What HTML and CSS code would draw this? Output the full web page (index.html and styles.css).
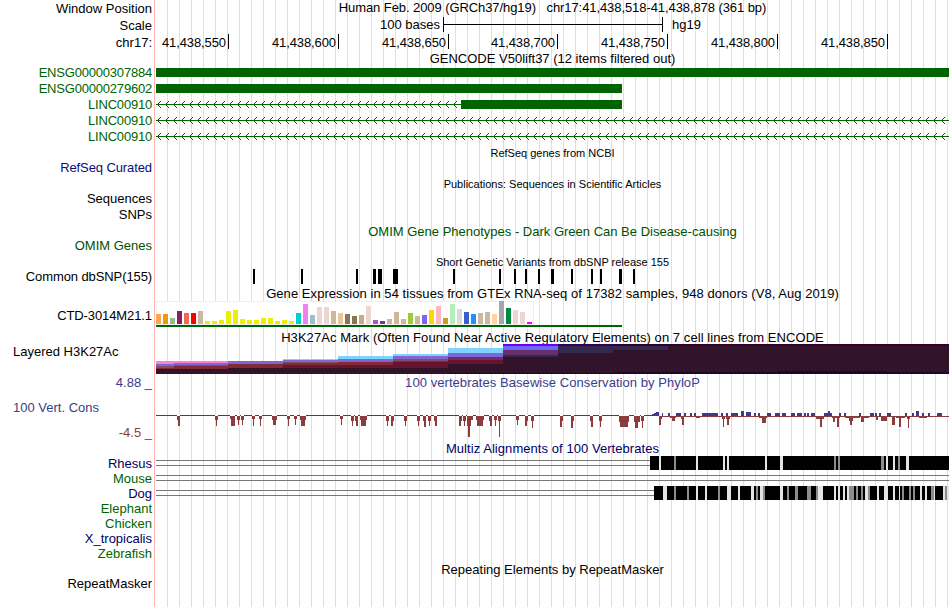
FILE: index.html
```html
<!DOCTYPE html>
<html lang="en">
<head>
<meta charset="utf-8">
<title>Genome Browser chr17:41,438,518-41,438,878</title>
<link rel="stylesheet" href="styles.css">
</head>
<body>
<main class="browser">
  <section class="row h16"><div class="label lower">Window Position</div><div class="plot title position">Human Feb. 2009 (GRCh37/hg19) &nbsp; chr17:41,438,518-41,438,878 (361 bp)</div></section>
  <section class="row h17"><div class="label lower">Scale</div><div class="plot scale"><span class="scale-size">100 bases</span><span class="scale-bar"></span><span>hg19</span></div></section>
  <section class="row h17"><div class="label lower">chr17:</div><div class="plot ruler"><span>41,438,550</span><span>41,438,600</span><span>41,438,650</span><span class="short">41,438,700</span><span>41,438,750</span><span>41,438,800</span><span>41,438,850</span></div></section>
  <section class="row h14"><div></div><div class="plot title lower">GENCODE V50lift37 (12 items filtered out)</div></section>
  <section class="row h16 gene"><div class="label lower">ENSG00000307884</div><svg class="plot" data-exon="0,793"></svg></section>
  <section class="row h16 gene"><div class="label lower">ENSG00000279602</div><svg class="plot" data-exon="0,466"></svg></section>
  <section class="row h16 gene"><div class="label lower">LINC00910</div><svg class="plot" data-intron="305" data-exon="305,161"></svg></section>
  <section class="row h16 gene"><div class="label lower">LINC00910</div><svg class="plot" data-intron="793"></svg></section>
  <section class="row h16 gene"><div class="label lower">LINC00910</div><svg class="plot" data-intron="793"></svg></section>
  <section class="row h16"><div></div><div class="plot title small lower">RefSeq genes from NCBI</div></section>
  <section class="row h15"><div class="label navy">RefSeq Curated</div></section>
  <section class="row h16"><div></div><div class="plot title small lower">Publications: Sequences in Scientific Articles</div></section>
  <section class="row h16"><div class="label">Sequences</div></section>
  <section class="row h16"><div class="label">SNPs</div></section>
  <section class="row h15 omim"><div></div><div class="plot title lower">OMIM Gene Phenotypes - Dark Green Can Be Disease-causing</div></section>
  <section class="row h15 omim"><div class="label">OMIM Genes</div></section>
  <section class="row h16"><div></div><div class="plot title small lower">Short Genetic Variants from dbSNP release 155</div></section>
  <section class="row h16"><div class="label tight">Common dbSNP(155)</div><svg class="plot" id="snps"></svg></section>
  <section class="row h16"><div></div><div class="plot title wide lower">Gene Expression in 54 tissues from GTEx RNA-seq of 17382 samples, 948 donors (V8, Aug 2019)</div></section>
  <section class="row h29"><div class="label tight">CTD-3014M21.1</div><svg class="plot" id="gtex"></svg></section>
  <section class="row h14"><div></div><div class="plot title wide">H3K27Ac Mark (Often Found Near Active Regulatory Elements) on 7 cell lines from ENCODE</div></section>
  <section class="row h30"><div class="label left">Layered H3K27Ac</div><svg class="plot" id="h3k27ac"></svg></section>
  <section class="row h18 phylop"><div class="label">4.88 _</div><div class="plot title wide">100 vertebrates Basewise Conservation by PhyloP</div></section>
  <section class="row h49 phylop"><div class="label left stacked"><span>100 Vert. Cons</span><span class="minimum">-4.5 _</span></div><svg class="plot" id="phylop"></svg></section>
  <section class="row h15"><div></div><div class="plot title wide multiz">Multiz Alignments of 100 Vertebrates</div></section>
  <section class="row h15"><div class="label species">Rhesus</div><svg class="plot" id="rhesus"></svg></section>
  <section class="row h15"><div class="label green">Mouse</div><svg class="plot" id="mouse"></svg></section>
  <section class="row h15"><div class="label species">Dog</div><svg class="plot" id="dog"></svg></section>
  <section class="row h15"><div class="label green">Elephant</div></section>
  <section class="row h15"><div class="label green">Chicken</div></section>
  <section class="row h15"><div class="label species">X_tropicalis</div></section>
  <section class="row h15"><div class="label green">Zebrafish</div></section>
  <section class="row h15"><div></div><div class="plot title lower">Repeating Elements by RepeatMasker</div></section>
  <section class="row h15"><div class="label">RepeatMasker</div></section>
</main>
<script src="tracks.js"></script>
</body>
</html>
```
FILE: styles.css
```css
* { box-sizing: border-box; }

body {
  margin: 0;
  background: #fff;
  color: #000;
  font: 13px "Liberation Sans", Arial, sans-serif;
}

.browser {
  width: 949px;
  height: 607px;
  overflow: hidden;
  background:
    linear-gradient(#ffb4b4, #ffb4b4) 154px 0 / 1px 100% no-repeat,
    repeating-linear-gradient(90deg, transparent 0 11px, #dcdcf8 11px 12px) 156px 0 / 793px 100% no-repeat;
}

.row { display: grid; grid-template-columns: 152px 793px; column-gap: 4px; white-space: nowrap; }
.h14 { height: 14px; line-height: 16px; }
.h15 { height: 15px; line-height: 15px; }
.h16 { height: 16px; line-height: 16px; }
.h17 { height: 17px; line-height: 17px; }
.h18 { height: 18px; line-height: 18px; }
.h29 { height: 29px; line-height: 29px; }
.h30 { height: 30px; line-height: 15px; }
.h49 { height: 49px; line-height: 15px; }

.label { text-align: right; }
.left { text-align: left; padding-left: 13px; }
.title { text-align: center; }
.lower { padding-top: 1px; }
.small { font-size: 11px; }
.tight { letter-spacing: -0.1px; }
.wide { letter-spacing: 0.06px; }
.position { letter-spacing: -0.08px; }
svg.plot { display: block; width: 793px; height: 100%; overflow: visible; shape-rendering: crispEdges; }

.gene .label { color: #006400; letter-spacing: -0.2px; }
.green { color: #006400; }
.navy { color: #0c0c78; letter-spacing: -0.1px; }
.species, .multiz { color: #000064; }
.omim { color: #005000; }
.phylop { color: #3c3c8c; }
.minimum { color: #8c3c3c; text-align: right; }
.stacked { display: flex; flex-direction: column; gap: 10px; padding-top: 8px; }

.scale { display: flex; padding-left: 224px; }
.scale-size { width: 59px; text-align: right; margin-right: 4px; }
.scale-bar {
  width: 220px;
  height: 15px;
  margin: 1px 9px 0 0;
  border: solid #000;
  border-width: 0 1px;
  background: linear-gradient(#000, #000) 0 7px / 100% 1px no-repeat;
}

.ruler { display: flex; padding-top: 1px; letter-spacing: -0.1px; }
.ruler span { width: 110px; height: 15px; padding-right: 2px; border-right: 1px solid #000; text-align: right; }
.ruler span:first-child { width: 73px; }
.ruler .short { width: 109px; }
```
FILE: tracks.js
```js
const NS = "http://www.w3.org/2000/svg";
const LEFT = 156;

// x is a window coordinate; y is relative to the row.
function box(svg, x, y, w, h, fill) {
  const r = document.createElementNS(NS, "rect");
  Object.entries({ x: x - LEFT, y, width: w, height: h, fill }).forEach(([k, v]) => r.setAttribute(k, v));
  svg.appendChild(r);
}
const byId = id => document.getElementById(id);

// Genes
const GREEN = "#006400";
document.querySelectorAll(".gene svg").forEach(svg => {
  if (svg.dataset.intron) {
    const end = LEFT + +svg.dataset.intron;
    box(svg, LEFT, 8, end - LEFT, 1, GREEN);
    for (let x = 157; x + 3 < end; x += 8)
      for (let i = 1; i < 4; i++) {
        box(svg, x + i, 8 - i, 1, 1, GREEN);
        box(svg, x + i, 8 + i, 1, 1, GREEN);
      }
  }
  if (svg.dataset.exon) {
    const [x, w] = svg.dataset.exon.split(",").map(Number);
    box(svg, LEFT + x, 4, w, 9, GREEN);
  }
});

// Common SNPs
[[253, 2], [301, 2], [356, 2], [373, 3], [378, 4], [393, 5], [453, 2], [499, 2], [514, 2], [525, 2],
 [538, 2], [551, 3], [571, 2], [591, 2], [600, 2], [619, 3], [633, 2]]
  .forEach(([x, w]) => box(byId("snps"), x, 0, w, 15, "#000"));

// GTEx tissue expression
const gtex = byId("gtex");
box(gtex, 156, 0, 378, 24, "#f0f0f0");
box(gtex, 157, 1, 376, 22, "#fff");
const heights = [10,10,6,13,11,11,13,3,3,4,13,14,5,4,4,6,6,3,4,3,11,20,9,17,17,13,11,10,
  8,9,18,4,3,5,12,5,11,8,9,14,18,6,20,15,12,10,11,12,10,23,16,14,12,2];
const tan = "#cdb79e", yellow = "#eeee00", rose = "#eed5d2";
const colors = ["#ffa54f","#ee9a00","#8fbc8f","#8b1c62","#ee6a50","#ff0000",tan,
  ...Array(13).fill(yellow),"#00cdcd","#ee82ee","#9ac0cd",rose,rose,tan,"#eec591","#8b7355",
  "#8b7355","#cdaa7d",rose,"#b452cd","#7a378b",tan,tan,tan,"#9acd32",tan,"#7a67ee","#ffd700",
  "#ffb6c1","#cd9b1d","#b4eeb4","#d9d9d9","#3a5fcd","#1e90ff",tan,tan,"#ffd39b","#a6a6a6",
  "#008b45",rose,rose,"#ff00ff"];
heights.forEach((h, i) => box(gtex, 156 + i * 7, 23 - h, 5, h, colors[i]));
box(gtex, 156, 24, 466, 2, GREEN);

// H3K27Ac: each band holds [offset from the row top, colour] steps down to the base
const pink = "#ff7fd4", violet = "#7f66d4", mauve = "#7f5064", brown = "#7f2a35",
  maroon = "#661430", dark = "#32142a", sky = "#7fd4ff", plum = "#66306a", ink = "#322850", base = "#190a28";
[[156, 18, [[17, pink], [20, violet], [22, mauve], [24, brown], [25, dark]]],
 [174, 54, [[17, pink], [19, violet], [21, mauve], [22, brown], [25, dark]]],
 [228, 55, [[17, violet], [20, brown], [24, dark]]],
 [283, 55, [[15, sky], [16, violet], [18, mauve], [19, brown], [21, maroon], [24, dark]]],
 [338, 55, [[12, sky], [15, violet], [18, brown], [21, maroon], [24, dark]]],
 [393, 55, [[10, sky], [12, violet], [15, mauve], [17, brown], [18, maroon], [24, dark]]],
 [448, 55, [[4, sky], [9, violet], [13, plum], [16, maroon], [20, dark], [29, base]]],
 [503, 55, [[0, "#6a00f0"], [2, "#6a66ff"], [6, plum], [11, ink], [13, dark], [29, base]]],
 [558, 55, [[0, "#320050"], [2, ink], [9, dark], [29, base]]],
 [613, 55, [[0, "#320028"], [2, ink], [6, dark], [28, base]]],
 [668, 110, [[0, "#320028"], [2, dark], [28, base]]],
 [778, 109, [[0, "#320028"], [2, dark], [27, base]]],
 [887, 62, [[0, "#320028"], [2, dark], [28, base]]]]
  .forEach(([x, w, steps]) => steps.forEach(([y, c]) => box(byId("h3k27ac"), x, y, w, 30 - y, c)));

// PhyloP: negative scores [x, width, height] hang below the axis, positive ones stand on it
const AXIS = 23, RED = "#8c3c3c", BLUE = "#3c3c8c";
const phylop = byId("phylop");
const down = [[177,3,4],[178,2,10],[215,3,4],[216,1,10],[230,5,3],[231,4,10],[237,3,4],[238,1,9],[241,3,4],
[242,1,9],[252,3,3],[253,1,10],[259,3,3],[260,1,10],[272,5,4],[273,3,9],[287,3,3],[288,1,10],[294,3,3],
[295,1,9],[300,6,4],[301,4,10],[340,3,3],[341,1,9],[351,3,5],[352,1,10],[355,3,5],[356,2,10],[360,7,4],
[361,5,10],[386,3,5],[387,1,10],[391,3,5],[391,2,10],[404,3,5],[405,1,10],[417,3,5],[418,1,10],[423,3,5],
[424,2,11],[428,3,5],[429,1,10],[434,3,5],[435,2,10],[459,3,5],[459,2,10],[463,3,5],[464,1,10],[467,6,4],
[467,4,10],[468,2,21],[476,8,4],[477,6,10],[489,3,5],[490,2,10],[494,3,4],[495,1,10],[498,3,5],[499,1,21],
[516,3,4],[517,1,9],[525,3,5],[525,2,10],[531,3,5],[532,1,12],[560,3,5],[560,2,11],[571,3,5],[571,2,12],
[590,3,5],[591,2,11],[599,3,5],[600,1,11],[619,10,6],[620,8,11],[634,6,6],[635,3,12],[641,3,5],[642,1,12],
[659,3,3],[659,2,9],[665,3,1],[670,6,2],[672,3,5],[681,3,3],[682,2,9],[689,1,1],[696,4,2],[722,3,3],
[723,1,11],[726,4,3],[727,2,9],[759,8,2],[762,4,7],[816,8,3],[820,2,11],[832,8,2],[833,2,6],[837,2,11],
[845,15,2],[849,4,5],[850,2,9],[861,8,2],[861,3,6],[876,2,4],[881,6,5],[892,3,9],[896,9,2],[899,2,11],
[907,3,3],[908,1,12],[919,8,2]];
const up = [[652,2,1],[654,2,2],[656,3,3],[662,1,2],[668,2,2],[676,5,2],[684,2,2],[690,2,2],[694,2,2],[702,16,2],
[721,2,2],[726,2,2],[731,7,2],[741,3,4],[746,5,3],[754,2,2],[758,2,2],[767,4,2],[775,5,2],[782,4,2],[791,4,2],
[797,5,2],[804,2,2],[807,2,2],[811,4,2],[824,8,2],[828,2,4],[839,2,2],[844,2,2],[859,2,2],[870,4,2],[875,2,2],
[879,2,2],[887,4,2],[905,2,2],[912,2,2],[916,3,4],[922,2,2],[928,2,2],[937,5,2]];
const CONSERVED = 659;
box(phylop, 156, AXIS, CONSERVED - 156, 1, BLUE);
box(phylop, CONSERVED, AXIS + 1, 949 - CONSERVED, 1, RED);
down.filter(([x]) => x < CONSERVED).forEach(([x, w]) => box(phylop, x, AXIS, w, 1, "#fff"));
down.forEach(([x, w, h]) => box(phylop, x, AXIS + 1, w, h, RED));
up.forEach(([x, w, h]) => box(phylop, x, AXIS - h, w, h + 1, BLUE));

// Multiz alignments: unaligned double line, then solid blocks with lighter gaps
const L = "#e4e4e4", G = "#8c8c8c";
function alignment(id, start, gaps) {
  const svg = byId(id);
  box(svg, 156, 4, start - 156, 1, "#787878");
  box(svg, 156, 9, start - 156, 1, "#787878");
  if (start < 949) box(svg, start, 0, 949 - start, 14, "#000");
  gaps.forEach(([x, w, c]) => box(svg, x, 0, w, 14, c));
}
alignment("rhesus", 650, [[659,2,L],[674,2,G],[696,2,L],[723,2,L],[727,2,L],[765,2,L],[780,3,L],[834,2,G],
[838,2,G],[881,3,G],[886,2,L],[893,2,L],[898,2,G],[906,3,L]]);
alignment("mouse", 949, []);
alignment("dog", 654, [[663,4,L],[674,2,G],[687,2,G],[696,2,L],[705,2,L],[718,2,G],[727,4,L],[738,2,L],[751,3,L],
[756,2,G],[760,3,L],[763,2,G],[780,3,L],[787,2,G],[795,3,G],[807,4,G],[816,2,G],[818,5,L],
[834,2,L],[838,2,L],[843,2,L],[847,2,L],[849,5,G],[856,2,G],[861,2,G],[865,3,L],[868,2,G],[877,2,L],[884,4,L],
[893,2,L],[899,1,L],[902,2,G],[909,2,G],[913,2,G],[920,2,L],[925,2,L],[931,3,G],[934,1,L],[943,2,L],[945,2,G],[947,2,L]]);
```
